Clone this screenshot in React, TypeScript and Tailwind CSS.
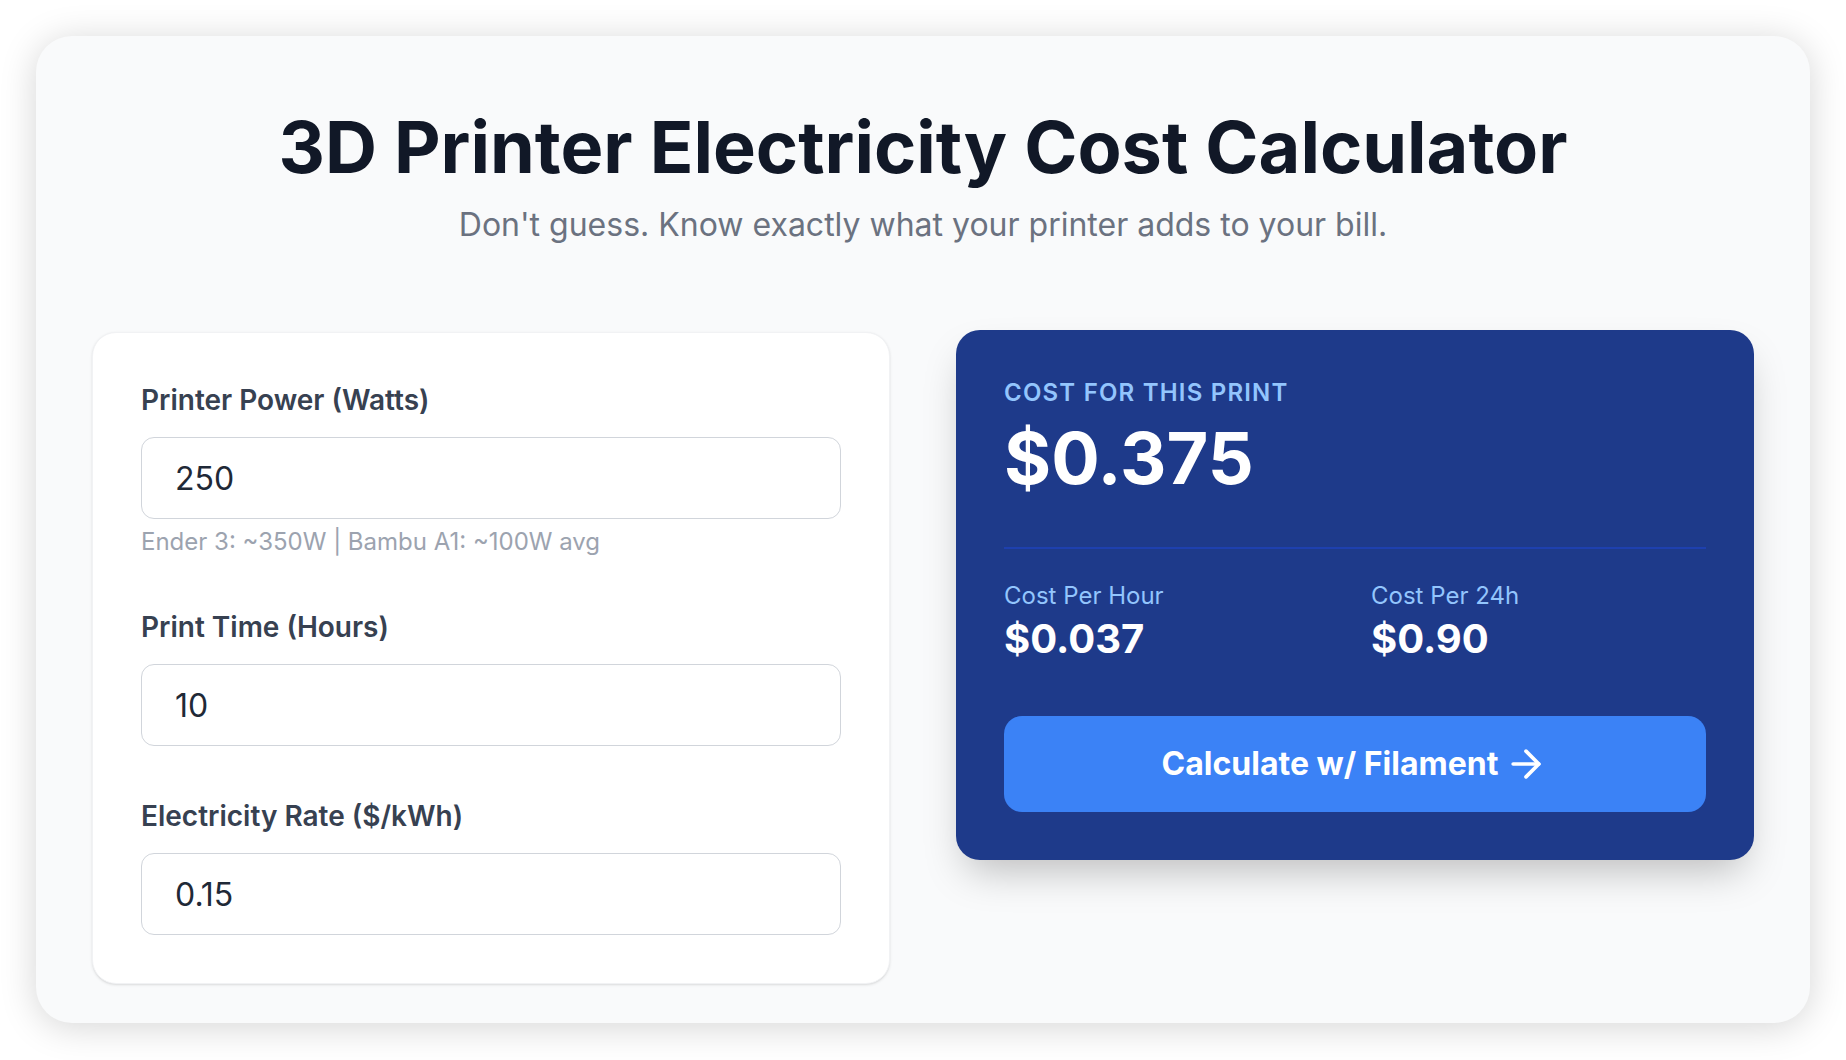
import React, { useState } from 'react';
import { ArrowRight } from 'lucide-react';

interface FieldProps {
  label: string;
  value: string;
  onChange: (v: string) => void;
  hint?: string;
}

function Field({ label, value, onChange, hint }: FieldProps) {
  return (
    <div>
      <label className="block text-[28px] leading-[40px] font-semibold text-[#374151] mb-[17px]">
        {label}
      </label>
      <input
        type="text"
        value={value}
        onChange={(e) => onChange(e.target.value)}
        className="block w-full h-[82px] px-[33px] text-[32px] text-[#1f2937] bg-white border-[1.5px] border-[#d1d5db] rounded-[13px] outline-none"
      />
      {hint && (
        <p className="mt-[8px] text-[24px] leading-[30px] text-[#9ca3af]">{hint}</p>
      )}
    </div>
  );
}

export default function App() {
  const [watts, setWatts] = useState('250');
  const [hours, setHours] = useState('10');
  const [rate, setRate] = useState('0.15');

  const w = parseFloat(watts) || 0;
  const h = parseFloat(hours) || 0;
  const r = parseFloat(rate) || 0;

  const perHour = (w / 1000) * r;
  const total = perHour * h;
  const perDay = perHour * 24;

  return (
    <div className="min-h-screen bg-white p-[36px] font-['Inter','Noto_Sans',sans-serif]">
      <div className="bg-[#f9fafb] rounded-[36px] shadow-[0_4px_36px_rgba(0,0,0,0.17)] px-[56px] pt-[75px] pb-[39px]">
        {/* Header */}
        <div className="text-center">
          <h1 className="text-[72px] leading-[72px] font-bold text-[#111827]">
            3D Printer Electricity Cost Calculator
          </h1>
          <p className="mt-[21px] text-[32px] leading-[42px] text-[#6b7280]">
            Don't guess. Know exactly what your printer adds to your bill.
          </p>
        </div>

        <div className="grid grid-cols-2 gap-[66px] items-start mt-[84px]">
          {/* Inputs */}
          <div className="mt-[2px] bg-white rounded-[24px] border-[1.5px] border-[#f1f2f4] shadow-sm pt-[47px] pb-[48px] px-[48px] flex flex-col gap-[50px]">
            <Field
              label="Printer Power (Watts)"
              value={watts}
              onChange={setWatts}
              hint="Ender 3: ~350W | Bambu A1: ~100W avg"
            />
            <Field label="Print Time (Hours)" value={hours} onChange={setHours} />
            <Field label="Electricity Rate ($/kWh)" value={rate} onChange={setRate} />
          </div>

          {/* Result */}
          <div className="bg-[#1e3a8a] rounded-[24px] shadow-[0_20px_40px_-10px_rgba(0,0,0,0.25)] p-[48px]">
            <div className="pb-[53px] border-b-2 border-[#1e40af]">
              <p className="text-[24px] leading-[30px] font-semibold uppercase tracking-[0.05em] text-[#93c5fd]">
                Cost for this print
              </p>
              <p className="mt-[14px] text-[72px] leading-[72px] font-bold text-white">
                ${total.toFixed(3)}
              </p>
            </div>

            <div className="grid grid-cols-2 gap-[32px] pt-[29px]">
              <div>
                <p className="text-[24px] leading-[36px] text-[#93c5fd]">Cost Per Hour</p>
                <p className="text-[40px] leading-[50px] font-bold text-white">
                  ${(Math.floor(perHour * 1000) / 1000).toFixed(3)}
                </p>
              </div>
              <div>
                <p className="text-[24px] leading-[36px] text-[#93c5fd]">Cost Per 24h</p>
                <p className="text-[40px] leading-[50px] font-bold text-white">
                  ${perDay.toFixed(2)}
                </p>
              </div>
            </div>

            <button
              type="button"
              className="mt-[52px] w-full h-[96px] rounded-[18px] bg-[#3b82f6] text-white text-[32px] font-bold flex items-center justify-center gap-[6px]"
            >
              Calculate w/ Filament
              <ArrowRight className="w-[44px] h-[44px]" strokeWidth={2} />
            </button>
          </div>
        </div>
      </div>
    </div>
  );
}
